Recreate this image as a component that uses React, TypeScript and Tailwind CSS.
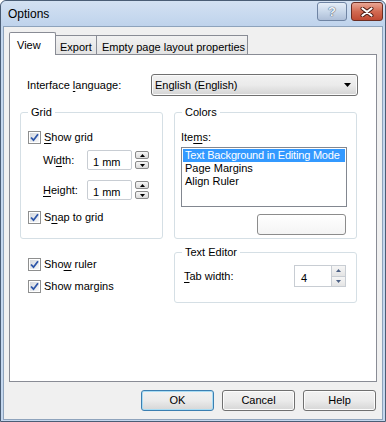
import React from 'react';

function U({ children }: { children: React.ReactNode }) {
  return <span className="underline underline-offset-[2px]">{children}</span>;
}

function CheckBox({ children }: { children: React.ReactNode }) {
  return (
    <div className="flex items-center h-[15px]">
      <div className="w-[13px] h-[13px] border border-[#8e8f8f] bg-white p-px">
        <div className="w-full h-full bg-gradient-to-br from-[#d4d8de] to-[#f7f8f9] flex items-center justify-center">
          <svg width="9" height="9" viewBox="0 0 9 9">
            <path d="M1 4.5 L3.5 7.2 L8 1.2" fill="none" stroke="#2c55a8" strokeWidth="1.8" />
          </svg>
        </div>
      </div>
      <span className="ml-[3px]">{children}</span>
    </div>
  );
}

function SmallSpin() {
  return (
    <div className="flex flex-col gap-[2px] ml-[3px]">
      <div className="w-[14px] h-[8px] rounded-[2px] border border-[#8a8a8a] bg-gradient-to-b from-[#f7f7f7] to-[#dcdcdc] flex items-center justify-center">
        <svg width="5" height="3" viewBox="0 0 5 3"><path d="M0 3 L2.5 0 L5 3 Z" fill="#000" /></svg>
      </div>
      <div className="w-[14px] h-[8px] rounded-[2px] border border-[#8a8a8a] bg-gradient-to-b from-[#f7f7f7] to-[#dcdcdc] flex items-center justify-center">
        <svg width="5" height="3" viewBox="0 0 5 3"><path d="M0 0 L2.5 3 L5 0 Z" fill="#000" /></svg>
      </div>
    </div>
  );
}

function GroupBox({ title, className, children }: { title: string; className: string; children: React.ReactNode }) {
  return (
    <div className={`relative border border-[#d5dfe5] rounded-[3px] ${className}`}>
      <span className="absolute left-[7px] top-[-7px] px-[3px] bg-white leading-[13px]">{title}</span>
      {children}
    </div>
  );
}

function DialogButton({ label, focused }: { label: string; focused?: boolean }) {
  return (
    <div
      className={`w-[73px] h-[21px] rounded-[3px] border flex items-center justify-center bg-gradient-to-b from-[#f2f2f2] via-[#ebebeb] to-[#d6d6d6] ${
        focused ? 'border-[#3c7fb1] shadow-[inset_0_0_0_1px_#a8dcf4]' : 'border-[#707070] shadow-[inset_0_0_0_1px_#fcfcfc]'
      }`}
    >
      {label}
    </div>
  );
}

export default function App() {
  return (
    <div className="w-[386px] h-[422px] bg-[#c4d7ee] border border-[#4a5d75] rounded-t-[6px] flex flex-col font-['Liberation_Sans',Arial,sans-serif] text-[11px] text-black">
      {/* Title bar */}
      <div className="h-[25px] flex justify-between pl-[7px] pr-[2px] bg-gradient-to-b from-[#d3e1f2] to-[#bfd3ec] rounded-t-[6px]">
        <span className="text-[12px] mt-[6px] leading-[14px]">Options</span>
        <div className="flex gap-[4px] mt-[1px]">
          <div className="w-[30px] h-[19px] rounded-[3px] border border-[#6f84a3] bg-gradient-to-b from-[#e6eef8] via-[#c9d8ea] to-[#aebfd8] flex items-center justify-center">
            <span className="text-[13px] font-bold leading-none text-[#eef3fa] [text-shadow:0_0_1px_#3d4d66,0_0_1px_#3d4d66]">?</span>
          </div>
          <div className="w-[32px] h-[19px] rounded-[3px] border border-[#6b2d22] bg-gradient-to-b from-[#e8a695] via-[#d26a52] to-[#c04a33] flex items-center justify-center">
            <svg width="14" height="10" viewBox="0 0 14 10">
              <path d="M2.5 1.5 L11.5 8.5 M11.5 1.5 L2.5 8.5" stroke="#4a1a12" strokeWidth="4" strokeLinecap="round" />
              <path d="M2.5 1.5 L11.5 8.5 M11.5 1.5 L2.5 8.5" stroke="#ffffff" strokeWidth="2.2" strokeLinecap="round" />
            </svg>
          </div>
        </div>
      </div>

      {/* Client area */}
      <div className="flex-1 mx-[2px] mb-[1px] bg-[#f0f0f0] border border-[#8ea3bc] flex flex-col px-[5px] pt-[5px]">
        {/* Tabs */}
        <div className="h-[22px] flex items-end">
          <div className="relative z-10 -mb-px h-[23px] w-[47px] bg-white border border-b-0 border-[#898c95] rounded-t-[2px] pl-[7px] pt-[4px]">
            View
          </div>
          <div className="h-[19px] w-[42px] -ml-px border border-b-0 border-[#898c95] bg-gradient-to-b from-[#f2f2f2] to-[#e3e3e3] pl-[4px] pt-[3px]">
            Export
          </div>
          <div className="h-[19px] w-[152px] -ml-px border border-b-0 border-[#898c95] bg-gradient-to-b from-[#f2f2f2] to-[#e3e3e3] pl-[5px] pt-[3px] whitespace-nowrap">
            Empty page layout properties
          </div>
        </div>

        {/* Tab panel */}
        <div className="h-[328px] bg-white border border-[#898c95]">
          <div className="flex items-center h-[22px] mt-[19px] pl-[17px]">
            <span className="w-[124px]">
              Interface <U>l</U>anguage:
            </span>
            <div className="w-[207px] h-[22px] rounded-[3px] border border-[#707070] bg-gradient-to-b from-[#f2f2f2] via-[#ebebeb] to-[#d4d4d4] shadow-[inset_0_0_0_1px_#fbfbfb] flex items-center justify-between pl-[3px] pr-[6px]">
              <span>English (English)</span>
              <svg width="7" height="4" viewBox="0 0 7 4"><path d="M0 0 L7 0 L3.5 4 Z" fill="#000" /></svg>
            </div>
          </div>

          <div className="grid grid-cols-[143px_183px] gap-x-[11px] gap-y-[13px] pl-[10px] mt-[16px]">
            <GroupBox title="Grid" className="h-[127px] pl-[7px] pt-[17px]">
              <CheckBox>
                <U>S</U>how grid
              </CheckBox>
              <div className="flex items-center mt-[5px] pl-[15px]">
                <span className="w-[44px]">
                  Wi<U>d</U>th:
                </span>
                <div className="w-[45px] h-[20px] border border-[#c8cdd3] rounded-[2px] pl-[5px] pt-[3px]">1 mm</div>
                <SmallSpin />
              </div>
              <div className="flex items-center mt-[10px] pl-[15px]">
                <span className="w-[44px]">
                  <U>H</U>eight:
                </span>
                <div className="w-[45px] h-[20px] border border-[#c8cdd3] rounded-[2px] pl-[5px] pt-[3px]">1 mm</div>
                <SmallSpin />
              </div>
              <div className="mt-[10px]">
                <CheckBox>
                  S<U>n</U>ap to grid
                </CheckBox>
              </div>
            </GroupBox>

            <GroupBox title="Colors" className="h-[127px] pl-[6px] pt-[17px]">
              <div className="h-[15px] leading-[15px]">
                Ite<U>m</U>s:
              </div>
              <div className="mt-[2px] w-[166px] h-[60px] border border-[#828790] p-px leading-[13px] whitespace-nowrap overflow-hidden">
                <div className="bg-[#3399ff] text-white pl-[2px] tracking-[-0.2px]">Text Background in Editing Mode</div>
                <div className="pl-[2px]">Page Margins</div>
                <div className="pl-[2px]">Align Ruler</div>
              </div>
              <div className="mt-[7px] ml-[76px] w-[89px] h-[21px] rounded-[3px] border border-[#8c8c8c] bg-gradient-to-b from-[#ffffff] to-[#f4f4f4]" />
            </GroupBox>

            <div className="pl-[8px] pt-[5px] flex flex-col gap-[7px]">
              <CheckBox>
                Sho<U>w</U> ruler
              </CheckBox>
              <CheckBox>Show margins</CheckBox>
            </div>

            <GroupBox title="Text Editor" className="h-[51px] pl-[9px] pt-[12px]">
              <div className="flex items-center">
                <span className="w-[110px]">
                  <U>T</U>ab width:
                </span>
                <div className="w-[37px] h-[22px] border border-[#c8cdd3] border-r-0 pl-[6px] pt-[4px]">4</div>
                <div className="flex flex-col w-[15px] h-[22px] border border-[#c8cdd3]">
                  <div className="flex-1 bg-gradient-to-b from-[#f6f6f6] to-[#e4e4e4] border-b border-[#c8cdd3] flex items-center justify-center">
                    <svg width="5" height="3" viewBox="0 0 5 3"><path d="M0 3 L2.5 0 L5 3 Z" fill="#4d6185" /></svg>
                  </div>
                  <div className="flex-1 bg-gradient-to-b from-[#f6f6f6] to-[#e4e4e4] flex items-center justify-center">
                    <svg width="5" height="3" viewBox="0 0 5 3"><path d="M0 0 L2.5 3 L5 0 Z" fill="#4d6185" /></svg>
                  </div>
                </div>
              </div>
            </GroupBox>
          </div>
        </div>

        {/* Buttons */}
        <div className="flex justify-end gap-[8px] mt-[8px] pr-px">
          <DialogButton label="OK" focused />
          <DialogButton label="Cancel" />
          <DialogButton label="Help" />
        </div>
      </div>
    </div>
  );
}
